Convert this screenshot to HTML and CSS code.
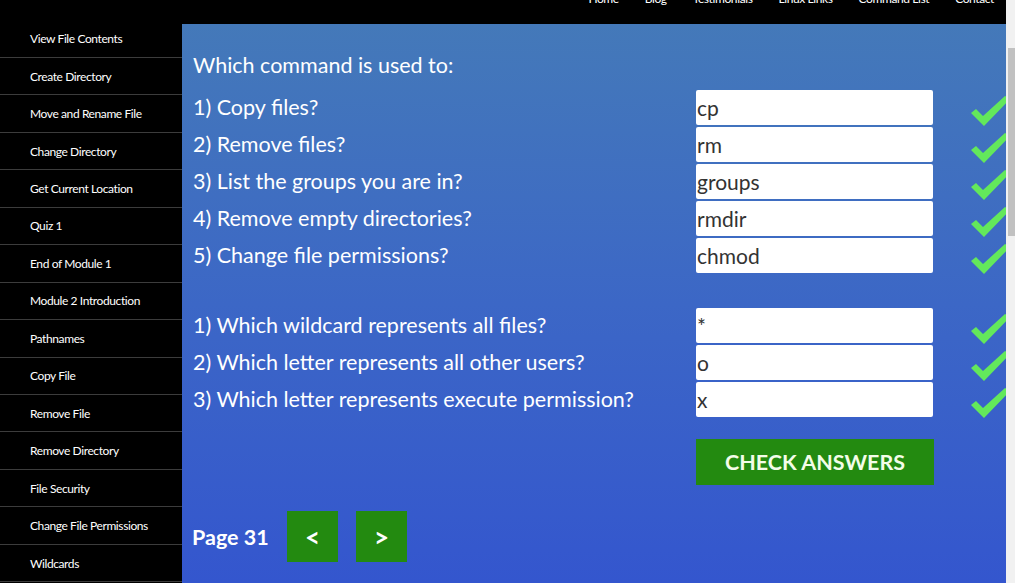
FILE: index.html
```html
<!DOCTYPE html>
<html>
<head>
<meta charset="utf-8">
<title>Quiz</title>
<link rel="stylesheet" href="styles.css">
</head>
<body>
<div class="page">
  <aside class="sidebar">
    <ul class="side-list">
      <li>View File Contents</li>
      <li>Create Directory</li>
      <li>Move and Rename File</li>
      <li>Change Directory</li>
      <li>Get Current Location</li>
      <li>Quiz 1</li>
      <li>End of Module 1</li>
      <li>Module 2 Introduction</li>
      <li>Pathnames</li>
      <li>Copy File</li>
      <li>Remove File</li>
      <li>Remove Directory</li>
      <li>File Security</li>
      <li>Change File Permissions</li>
      <li>Wildcards</li>
    </ul>
  </aside>
  <div class="right">
    <header class="topbar">
      <nav class="nav">
        <span>Home</span>
        <span>Blog</span>
        <span>Testimonials</span>
        <span>Linux Links</span>
        <span>Command List</span>
        <span>Contact</span>
      </nav>
    </header>
    <main class="main">
      <h2 class="heading">Which command is used to:</h2>
      <div class="quiz">
        <div class="label">1) Copy files?</div><div class="answer">cp</div><svg class="check" viewBox="0 0 40 32"><path d="M1 17 L6 13 L13 20 L35 0 L40 3 L14 30 Z"/></svg>
        <div class="label">2) Remove files?</div><div class="answer">rm</div><svg class="check" viewBox="0 0 40 32"><path d="M1 17 L6 13 L13 20 L35 0 L40 3 L14 30 Z"/></svg>
        <div class="label">3) List the groups you are in?</div><div class="answer">groups</div><svg class="check" viewBox="0 0 40 32"><path d="M1 17 L6 13 L13 20 L35 0 L40 3 L14 30 Z"/></svg>
        <div class="label">4) Remove empty directories?</div><div class="answer">rmdir</div><svg class="check" viewBox="0 0 40 32"><path d="M1 17 L6 13 L13 20 L35 0 L40 3 L14 30 Z"/></svg>
        <div class="label">5) Change file permissions?</div><div class="answer">chmod</div><svg class="check" viewBox="0 0 40 32"><path d="M1 17 L6 13 L13 20 L35 0 L40 3 L14 30 Z"/></svg>
      </div>
      <div class="quiz quiz2">
        <div class="label">1) Which wildcard represents all files?</div><div class="answer">*</div><svg class="check" viewBox="0 0 40 32"><path d="M1 17 L6 13 L13 20 L35 0 L40 3 L14 30 Z"/></svg>
        <div class="label">2) Which letter represents all other users?</div><div class="answer">o</div><svg class="check" viewBox="0 0 40 32"><path d="M1 17 L6 13 L13 20 L35 0 L40 3 L14 30 Z"/></svg>
        <div class="label">3) Which letter represents execute permission?</div><div class="answer">x</div><svg class="check" viewBox="0 0 40 32"><path d="M1 17 L6 13 L13 20 L35 0 L40 3 L14 30 Z"/></svg>
      </div>
      <div class="actions">
        <button class="check-btn">CHECK ANSWERS</button>
      </div>
      <div class="pager">
        <span class="page-num">Page 31</span>
        <button class="pg-btn">&lt;</button>
        <button class="pg-btn">&gt;</button>
      </div>
    </main>
  </div>
  <div class="scrollbar"><div class="thumb"></div></div>
</div>
</body>
</html>
```

FILE: styles.css
```css
html, body {
  margin: 0;
  padding: 0;
  height: 100%;
  overflow: hidden;
}
body {
  font-family: Lato, "Open Sans", sans-serif;
  background: #000;
}
.page {
  display: flex;
  height: 583px;
  width: 1015px;
}
.sidebar {
  width: 182px;
  flex: none;
  background: #000;
  padding-top: 20.5px;
  box-sizing: border-box;
}
.side-list {
  list-style: none;
  margin: 0;
  padding: 0;
}
.side-list li {
  height: 36.46px;
  border-bottom: 1px solid #3c3c3c;
  display: flex;
  align-items: center;
  padding-left: 30px;
  color: #fff;
  font-size: 12px;
  letter-spacing: -0.4px;
}
.right {
  flex: 1;
  display: flex;
  flex-direction: column;
  min-width: 0;
}
.topbar {
  height: 24px;
  flex: none;
  background: #000;
  overflow: hidden;
}
.nav {
  display: flex;
  justify-content: flex-end;
  gap: 26px;
  padding-right: 12px;
  margin-top: -8px;
  font-size: 12px;
  line-height: 14px;
  color: #fff;
  letter-spacing: -0.4px;
}
.main {
  flex: 1;
  background: linear-gradient(180deg, #4479b9 0%, #3c67c6 50%, #3456ce 100%);
  padding: 0 0 0 11px;
  overflow: hidden;
  color: #fff;
}
.heading {
  margin: 27px 0 0;
  font-size: 21.5px;
  font-weight: 400;
  line-height: 28px;
}
.quiz {
  display: grid;
  grid-template-columns: 503px 237px 1fr;
  grid-auto-rows: 35px;
  row-gap: 2px;
  margin-top: 11px;
  align-items: start;
}
.quiz2 {
  margin-top: 35px;
}
.label {
  font-size: 21.5px;
  line-height: 35px;
  height: 35px;
}
.answer {
  height: 35px;
  background: #fff;
  border-radius: 2px;
  color: #333;
  font-size: 21px;
  line-height: 35px;
  padding-left: 1px;
  box-sizing: border-box;
}
.check {
  width: 40px;
  height: 32px;
  margin-left: 37px;
  margin-top: 6px;
  fill: #63e85b;
}
.actions {
  margin-top: 22px;
  padding-left: 503px;
}
.check-btn {
  display: block;
  width: 238px;
  height: 46px;
  border: 0;
  background: #238a10;
  color: #f3fde8;
  font-family: Lato, sans-serif;
  font-weight: 700;
  font-size: 21.5px;
  padding: 0;
}
.pager {
  display: flex;
  align-items: center;
  margin-top: 26px;
}
.page-num {
  font-size: 21.5px;
  font-weight: 700;
  width: 95px;
  margin-left: -1px;
}
.pg-btn {
  width: 51px;
  height: 51px;
  border: 0;
  background: #238a10;
  color: #fff;
  font-family: Lato, sans-serif;
  font-weight: 700;
  font-size: 26px;
  padding: 0;
  margin-right: 18px;
}
.scrollbar {
  width: 9px;
  flex: none;
  background: #f1f1f1;
}
.thumb {
  margin: 48px 0 0 2px;
  height: 188px;
  background: #c1c1c1;
}
```
